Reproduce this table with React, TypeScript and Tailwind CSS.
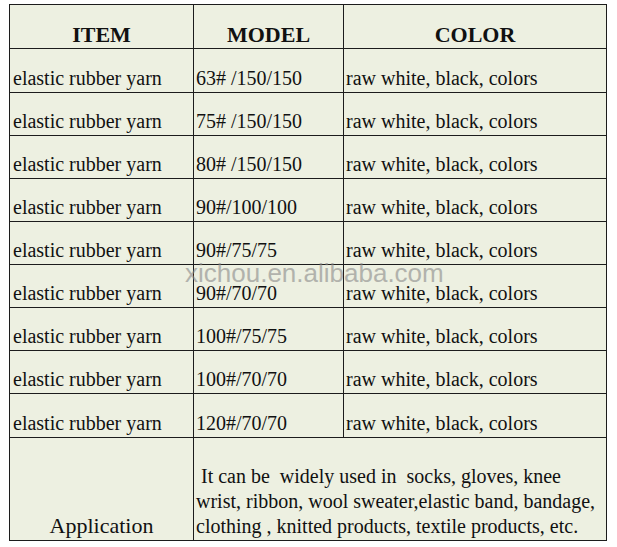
import * as React from "react";

// =============================================================================
// DATA
// =============================================================================

interface YarnRow {
  item: string;
  model: string;
  color: string;
  tall?: boolean;
}

const rows: YarnRow[] = [
  { item: "elastic rubber yarn", model: "63# /150/150", color: "raw white, black, colors", tall: true },
  { item: "elastic rubber yarn", model: "75# /150/150", color: "raw white, black, colors" },
  { item: "elastic rubber yarn", model: "80# /150/150", color: "raw white, black, colors" },
  { item: "elastic rubber yarn", model: "90#/100/100", color: "raw white, black, colors" },
  { item: "elastic rubber yarn", model: "90#/75/75", color: "raw white, black, colors" },
  { item: "elastic rubber yarn", model: "90#/70/70", color: "raw white, black, colors" },
  { item: "elastic rubber yarn", model: "100#/75/75", color: "raw white, black, colors" },
  { item: "elastic rubber yarn", model: "100#/70/70", color: "raw white, black, colors" },
  { item: "elastic rubber yarn", model: "120#/70/70", color: "raw white, black, colors", tall: true },
];

const applicationLines = [
  " It can be  widely used in  socks, gloves, knee",
  "wrist, ribbon, wool sweater,elastic band, bandage,",
  "clothing , knitted products, textile products, etc.",
];

// =============================================================================
// COMPONENT
// =============================================================================

const cell = "border border-[#1c1c1c] align-bottom whitespace-nowrap overflow-hidden";

const App: React.FC = () => {
  return (
    <div className="min-h-[547px] w-[617px] bg-white pl-[9px] pt-[4px] font-['Liberation_Serif',serif] text-[#111]">
      <div className="relative w-[597px]">
        <table className="w-[597px] table-fixed border-collapse bg-[#edf0e1]">
          <colgroup>
            <col className="w-[184px]" />
            <col className="w-[150px]" />
            <col className="w-[263px]" />
          </colgroup>
          <thead>
            {/* Header */}
            <tr className="h-[44px] text-[22px] font-bold leading-[25px]">
              <th className={`${cell} pb-[1px] text-center`}>ITEM</th>
              <th className={`${cell} pb-[1px] text-center`}>MODEL</th>
              <th className={`${cell} pb-[1px] text-center`}>COLOR</th>
            </tr>
          </thead>
          <tbody className="text-[20px] leading-[22px]">
            {rows.map((row, i) => (
              <tr key={i} className={row.tall ? "h-[44px]" : "h-[43px]"}>
                <td className={`${cell} pb-[3px] pl-[3px]`}>{row.item}</td>
                <td className={`${cell} pb-[3px] pl-[2px]`}>{row.model}</td>
                <td className={`${cell} pb-[3px] pl-[2px]`}>{row.color}</td>
              </tr>
            ))}

            {/* Application */}
            <tr className="h-[103px]">
              <td className={`${cell} pb-[2px] text-center text-[22px] leading-[25px]`}>Application</td>
              <td colSpan={2} className={`${cell} pb-[1px] pl-[2px] text-[20px] leading-[25px]`}>
                {applicationLines.map((line, i) => (
                  <div key={i} className="whitespace-pre">
                    {line}
                  </div>
                ))}
              </td>
            </tr>
          </tbody>
        </table>

        {/* Watermark */}
        <div className="pointer-events-none absolute left-[176px] top-[254px] font-['Liberation_Sans',sans-serif] text-[26px] leading-[30px] text-[#8a8a8a] opacity-60">
          xichou.en.alibaba.com
        </div>
      </div>
    </div>
  );
};

export default App;
